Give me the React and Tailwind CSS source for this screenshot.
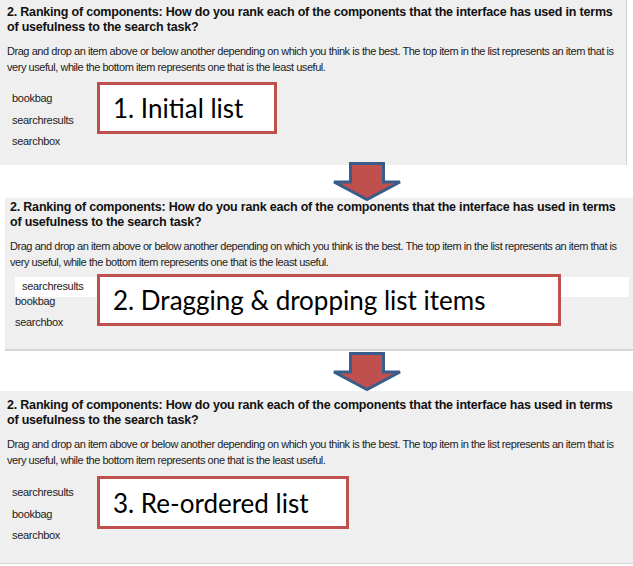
import React from "react";

const Arrow = () => (
  <svg width="70" height="39" viewBox="0 0 70 39" className="block">
    <path
      d="M18.5 1.5 H51.5 V20 H68 L35 37.5 L2 20 H18.5 Z"
      fill="#c0504d"
      stroke="#385d8a"
      strokeWidth="3"
      strokeLinejoin="miter"
    />
  </svg>
);

const Heading = () => (
  <div className="font-bold text-[12.5px] leading-[14.5px] text-[#111] tracking-[-0.2px]" style={{ fontFamily: '"Liberation Sans", Arial, sans-serif' }}>
    2. Ranking of components: How do you rank each of the components that the interface has used in terms of usefulness to the search task?
  </div>
);

const Para = () => (
  <div className="text-[11px] leading-[16px] text-[#222] mt-[9px] tracking-[-0.45px]" style={{ fontFamily: '"Liberation Sans", Arial, sans-serif' }}>
    Drag and drop an item above or below another depending on which you think is the best. The top item in the list represents an item that is very useful, while the bottom item represents one that is the least useful.
  </div>
);

const Item = ({ children, className = "" }) => (
  <div className={"text-[11px] leading-[21.5px] text-[#222] tracking-[-0.3px] " + className} style={{ fontFamily: '"Liberation Sans", Arial, sans-serif' }}>
    {children}
  </div>
);

const Label = ({ children, className = "" }) => (
  <div
    className={"absolute bg-white border-[3px] border-[#c0504d] text-black text-[26px] leading-none flex items-center pl-[13px] " + className}
    style={{ fontFamily: 'Lato, "Open Sans", sans-serif' }}
  >
    {children}
  </div>
);

export default function App() {
  return (
    <div className="w-[633px] h-[566px] bg-white overflow-hidden relative">
      {/* Panel 1 */}
      <div className="relative w-[627px] h-[165px] bg-[#efefef] border-r border-[#cfcfcf] pl-[7px] pr-[8px] pt-[5px]">
        <Heading />
        <Para />
        <div className="mt-[13px] pl-[5px]">
          <Item>bookbag</Item>
          <Item>searchresults</Item>
          <Item>searchbox</Item>
        </div>
        <Label className="left-[97px] top-[82px] w-[180px] h-[52px]">1. Initial list</Label>
      </div>

      {/* Arrow 1 */}
      <div className="relative h-[33px] z-10">
        <div className="absolute left-[332px] top-[-3px]">
          <Arrow />
        </div>
      </div>

      {/* Panel 2 */}
      <div className="relative ml-[5px] h-[153px] bg-[#efefef] border-b-2 border-[#d6d6d6] pl-[5px] pr-[4px] pt-[2px]">
        <Heading />
        <Para />
        <div className="mt-[7px]">
          <div className="ml-[5px] bg-white pl-[7px] h-[20px] flex items-center">
            <Item className="leading-[16px]">searchresults</Item>
          </div>
          <div className="-mt-[6px] pl-[5px]">
            <Item className="leading-[21px]">bookbag</Item>
            <Item className="leading-[21px]">searchbox</Item>
          </div>
        </div>
        <Label className="left-[92px] top-[76px] w-[464px] h-[52px]">2. Dragging &amp; dropping list items</Label>
      </div>

      {/* Arrow 2 */}
      <div className="relative h-[40px] z-10">
        <div className="absolute left-[332px] top-[1px]">
          <Arrow />
        </div>
      </div>

      {/* Panel 3 */}
      <div className="relative h-[173px] bg-[#efefef] border-b border-[#d6d6d6] pl-[7px] pr-[14px] pt-[7px]">
        <Heading />
        <Para />
        <div className="mt-[14px] pl-[5px]">
          <Item>searchresults</Item>
          <Item>bookbag</Item>
          <Item>searchbox</Item>
        </div>
        <Label className="left-[97px] top-[85px] w-[252px] h-[53px]">3. Re-ordered list</Label>
      </div>
    </div>
  );
}
